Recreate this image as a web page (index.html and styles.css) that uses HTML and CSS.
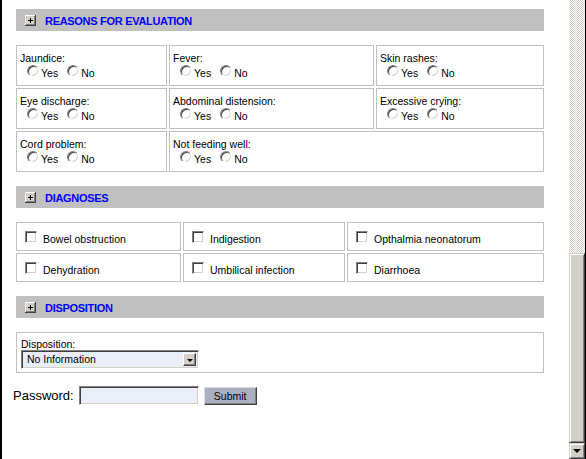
FILE: index.html
```html
<!DOCTYPE html>
<html>
<head>
<meta charset="utf-8">
<title>Newborn evaluation</title>
<link rel="stylesheet" href="styles.css">
</head>
<body>
<div class="frame">
  <main class="page">
    <section class="section">
      <div class="bar">
        <svg class="toggle" width="11" height="11" viewBox="0 0 11 11" shape-rendering="crispEdges">
          <rect x="0" y="0" width="11" height="11" fill="#d4d0c8"/>
          <path d="M0 0.5H10M0.5 0V10" stroke="#fff"/>
          <path d="M1 9.5H10M9.5 1V10" stroke="#808080"/>
          <path d="M0 10.5H11M10.5 0V11" stroke="#404040"/>
          <path d="M3 5.5H8M5.5 3V8" stroke="#000"/>
        </svg>
        <span class="bar-title">REASONS FOR EVALUATION</span>
      </div>
      <div class="grid reasons">
        <div class="cell">
          <div class="q">Jaundice:</div>
          <div class="opts"><label class="opt"><input type="radio" name="jaundice">Yes</label><label class="opt"><input type="radio" name="jaundice">No</label></div>
        </div>
        <div class="cell">
          <div class="q">Fever:</div>
          <div class="opts"><label class="opt"><input type="radio" name="fever">Yes</label><label class="opt"><input type="radio" name="fever">No</label></div>
        </div>
        <div class="cell">
          <div class="q">Skin rashes:</div>
          <div class="opts"><label class="opt"><input type="radio" name="rash">Yes</label><label class="opt"><input type="radio" name="rash">No</label></div>
        </div>
        <div class="cell">
          <div class="q">Eye discharge:</div>
          <div class="opts"><label class="opt"><input type="radio" name="eye">Yes</label><label class="opt"><input type="radio" name="eye">No</label></div>
        </div>
        <div class="cell">
          <div class="q">Abdominal distension:</div>
          <div class="opts"><label class="opt"><input type="radio" name="abd">Yes</label><label class="opt"><input type="radio" name="abd">No</label></div>
        </div>
        <div class="cell">
          <div class="q">Excessive crying:</div>
          <div class="opts"><label class="opt"><input type="radio" name="cry">Yes</label><label class="opt"><input type="radio" name="cry">No</label></div>
        </div>
        <div class="cell">
          <div class="q">Cord problem:</div>
          <div class="opts"><label class="opt"><input type="radio" name="cord">Yes</label><label class="opt"><input type="radio" name="cord">No</label></div>
        </div>
        <div class="cell span2">
          <div class="q">Not feeding well:</div>
          <div class="opts"><label class="opt"><input type="radio" name="feed">Yes</label><label class="opt"><input type="radio" name="feed">No</label></div>
        </div>
      </div>
    </section>

    <section class="section">
      <div class="bar">
        <svg class="toggle" width="11" height="11" viewBox="0 0 11 11" shape-rendering="crispEdges">
          <rect x="0" y="0" width="11" height="11" fill="#d4d0c8"/>
          <path d="M0 0.5H10M0.5 0V10" stroke="#fff"/>
          <path d="M1 9.5H10M9.5 1V10" stroke="#808080"/>
          <path d="M0 10.5H11M10.5 0V11" stroke="#404040"/>
          <path d="M3 5.5H8M5.5 3V8" stroke="#000"/>
        </svg>
        <span class="bar-title">DIAGNOSES</span>
      </div>
      <div class="grid diagnoses">
        <label class="dcell"><input type="checkbox">Bowel obstruction</label>
        <label class="dcell"><input type="checkbox">Indigestion</label>
        <label class="dcell"><input type="checkbox">Opthalmia neonatorum</label>
        <label class="dcell"><input type="checkbox">Dehydration</label>
        <label class="dcell"><input type="checkbox">Umbilical infection</label>
        <label class="dcell"><input type="checkbox">Diarrhoea</label>
      </div>
    </section>

    <section class="section last">
      <div class="bar">
        <svg class="toggle" width="11" height="11" viewBox="0 0 11 11" shape-rendering="crispEdges">
          <rect x="0" y="0" width="11" height="11" fill="#d4d0c8"/>
          <path d="M0 0.5H10M0.5 0V10" stroke="#fff"/>
          <path d="M1 9.5H10M9.5 1V10" stroke="#808080"/>
          <path d="M0 10.5H11M10.5 0V11" stroke="#404040"/>
          <path d="M3 5.5H8M5.5 3V8" stroke="#000"/>
        </svg>
        <span class="bar-title">DISPOSITION</span>
      </div>
      <div class="dispbox">
        <div class="dlabel">Disposition:</div>
        <div class="select">
          <span class="select-text">No Information</span>
          <span class="select-btn"><span class="arrow"></span></span>
        </div>
      </div>
    </section>

    <div class="login">
      <span class="login-label">Password:</span>
      <span class="pw"></span>
      <span class="submit">Submit</span>
    </div>
  </main>
  <div class="scrollbar">
    <div class="track"></div>
    <div class="thumb"></div>
    <div class="sbtn"><span class="sarrow"></span></div>
  </div>
</div>
</body>
</html>
```

FILE: styles.css
```css
* { box-sizing: border-box; }
html, body { margin: 0; padding: 0; }
body {
  width: 586px;
  height: 459px;
  overflow: hidden;
  background: #fff;
  color: #000;
  font-family: "Liberation Sans", Arial, sans-serif;
  font-size: 10.5px;
}
.frame {
  display: flex;
  height: 459px;
  border-left: 2px solid #000;
  border-right: 1px solid #000;
}
.page {
  flex: 1;
  padding: 9px 0 0 14px;
}
.section {
  width: 528px;
  margin-bottom: 14px;
}
.section.last { margin-bottom: 13px; }
.bar {
  height: 22px;
  background: #c0c0c0;
  display: flex;
  align-items: center;
  padding-left: 9px;
  margin-bottom: 14px;
}
.toggle { display: block; margin-right: 9px; }
.bar-title {
  color: #0000ff;
  font-weight: bold;
  font-size: 11px;
  letter-spacing: -0.3px;
  margin-top: 2px;
}
.grid { display: grid; gap: 2px; }
.reasons {
  grid-template-columns: 151px 205px 1fr;
  grid-auto-rows: 41px;
}
.diagnoses {
  grid-template-columns: 165px 162px 1fr;
  grid-auto-rows: 29px;
}
.cell {
  border: 1px solid #c0c0c0;
  padding: 6px 0 0 3px;
}
.span2 { grid-column: span 2; }
.q { line-height: 13px; white-space: nowrap; }
.opts { line-height: 13px; padding-left: 7px; white-space: nowrap; }
.opt { margin-right: 9px; }
input[type="radio"], input[type="checkbox"] {
  -webkit-appearance: none;
  appearance: none;
  display: inline-block;
  width: 12px;
  height: 12px;
  margin: 0 2px 0 0;
  vertical-align: baseline;
  background: #fff;
  border: 1px solid;
  border-color: #808080 #fff #fff #808080;
  box-shadow: inset 1px 1px 0 #404040, inset -1px -1px 0 #d4d0c8;
}
input[type="radio"] { border-radius: 50%; }
.dcell {
  display: block;
  border: 1px solid #c0c0c0;
  padding: 8px 0 0 8px;
  line-height: 13px;
  white-space: nowrap;
}
.dcell input[type="checkbox"] { margin-right: 6px; }
.dispbox {
  height: 41px;
  border: 1px solid #c0c0c0;
  padding: 5px 0 0 4px;
}
.dlabel { line-height: 12px; }
.select {
  width: 178px;
  height: 19px;
  display: flex;
  align-items: center;
  justify-content: space-between;
  background: #e9eef9;
  border: 1px solid;
  border-color: #808080 #fff #fff #808080;
  box-shadow: inset 1px 1px 0 #404040, inset -1px -1px 0 #d4d0c8;
  padding: 0 2px 0 5px;
}
.select-text { line-height: 13px; }
.select-btn {
  width: 13px;
  height: 13px;
  display: flex;
  align-items: center;
  justify-content: center;
  background: #d4d0c8;
  border: 1px solid;
  border-color: #fff #404040 #404040 #fff;
  box-shadow: inset -1px -1px 0 #808080;
}
.arrow {
  width: 0;
  height: 0;
  border-left: 3px solid transparent;
  border-right: 3px solid transparent;
  border-top: 3px solid #000;
  margin-top: 1px;
}
.login {
  display: flex;
  align-items: center;
  margin-left: -3px;
}
.login-label {
  font-size: 13px;
  margin-right: 5px;
}
.pw {
  display: block;
  width: 120px;
  height: 19px;
  background: #e9eef9;
  border: 1px solid;
  border-color: #808080 #fff #fff #808080;
  box-shadow: inset 1px 1px 0 #404040, inset -1px -1px 0 #d4d0c8;
  margin-right: 5px;
}
.submit {
  display: flex;
  align-items: center;
  justify-content: center;
  width: 53px;
  height: 18px;
  margin-top: 1px;
  background: #a9b1c1;
  border: 1px solid;
  border-color: #d8dce4 #404040 #404040 #d8dce4;
  box-shadow: inset -1px -1px 0 #808080;
  font-size: 10.5px;
}
.scrollbar {
  width: 16px;
  display: flex;
  flex-direction: column;
}
.track {
  flex: 1;
  background: repeating-conic-gradient(#d4d0c8 0 25%, #fff 0 50%) 0 0 / 2px 2px;
}
.thumb {
  height: 190px;
  background: #d4d0c8;
  border: 1px solid;
  border-color: #d4d0c8 #404040 #404040 #d4d0c8;
  box-shadow: inset 1px 1px 0 #fff, inset -1px -1px 0 #808080;
}
.sbtn {
  height: 16px;
  display: flex;
  align-items: center;
  justify-content: center;
  background: #d4d0c8;
  border: 1px solid;
  border-color: #d4d0c8 #404040 #404040 #d4d0c8;
  box-shadow: inset 1px 1px 0 #fff, inset -1px -1px 0 #808080;
}
.sarrow {
  width: 0;
  height: 0;
  border-left: 4px solid transparent;
  border-right: 4px solid transparent;
  border-top: 4px solid #000;
}
```
